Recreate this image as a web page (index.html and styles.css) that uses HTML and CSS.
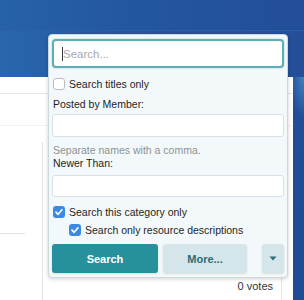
FILE: index.html
```html
<!DOCTYPE html>
<html>
<head>
<meta charset="utf-8">
<link rel="stylesheet" href="styles.css">
</head>
<body>
<div class="page">
  <header class="header">
    <div class="topbar"></div>
    <div class="navbar"></div>
  </header>
  <main class="content">
    <div class="tabs"></div>
    <div class="subtabs"></div>
    <div class="body">
      <div class="side"><div class="side-line"></div></div>
      <div class="box">
        <div class="votes">0 votes</div>
      </div>
    </div>
  </main>

  <form class="search-menu">
    <div class="kw-wrap">
      <input class="kw" type="text" placeholder="Search...">
      <span class="caret"></span>
    </div>
    <label class="check-row">
      <span class="cb"></span>
      <span>Search titles only</span>
    </label>
    <div class="label">Posted by Member:</div>
    <input class="field f1" type="text">
    <div class="note">Separate names with a comma.</div>
    <div class="label2">Newer Than:</div>
    <input class="field f2" type="text">
    <label class="check-row r2">
      <span class="cb on"><svg viewBox="0 0 12 12" width="12" height="12"><path d="M3 6.2 5.1 8.3 9 3.8" fill="none" stroke="#fff" stroke-width="1.7" stroke-linecap="round" stroke-linejoin="round"/></svg></span>
      <span>Search this category only</span>
    </label>
    <label class="check-row r3">
      <span class="cb on"><svg viewBox="0 0 12 12" width="12" height="12"><path d="M3 6.2 5.1 8.3 9 3.8" fill="none" stroke="#fff" stroke-width="1.7" stroke-linecap="round" stroke-linejoin="round"/></svg></span>
      <span>Search only resource descriptions</span>
    </label>
    <div class="buttons">
      <button type="button" class="btn primary">Search</button>
      <button type="button" class="btn more">More...</button>
      <button type="button" class="btn drop"><svg viewBox="0 0 8 5" width="8" height="5"><path d="M0.5 0.5h7L4 4.5z" fill="#2b6d78"/></svg></button>
    </div>
  </form>
</div>
</body>
</html>
```

FILE: styles.css
```css
* { box-sizing: border-box; }
html, body { margin: 0; padding: 0; }
body {
  width: 304px;
  height: 300px;
  overflow: hidden;
  font-family: "Liberation Sans", Arial, sans-serif;
  background:
    radial-gradient(ellipse 14px 40px at 304px 78px, rgba(90,170,220,0.55), rgba(90,170,220,0) 100%),
    linear-gradient(180deg, #23519b 0%, #1f4a95 100%);
}
.page { position: relative; width: 304px; height: 300px; }

.header { height: 77px; }
.topbar {
  height: 30px;
  background: linear-gradient(90deg, #2662a9 0%, #2456a0 45%, #234e99 100%);
}
.navbar {
  height: 47px;
  background:
    radial-gradient(ellipse 26px 22px at 8px 72px, rgba(70,150,205,0.6), rgba(70,150,205,0) 100%),
    linear-gradient(90deg, #2966ad 0%, #2558a1 40%, #234f99 100%);
  border-top: 1px solid #2a5fa6;
}

.content {
  width: 293px;
  height: 223px;
  background: #ffffff;
}
.tabs {
  height: 17px;
  border-bottom: 1px solid #e3e8ec;
}
.subtabs {
  height: 32px;
  border-bottom: 1px solid #f1f3f5;
}
.body {
  display: flex;
  height: 174px;
}
.side { width: 42px; padding-top: 107px; }
.side-line { width: 25px; height: 1px; background: #dfe4e8; }
.box {
  width: 240px;
  margin-top: 16px;
  border-left: 1px solid #e1e6ea;
  border-right: 1px solid #e1e6ea;
  padding: 138px 8px 0 0;
}
.votes {
  text-align: right;
  font-size: 11px;
  color: #333;
  line-height: 13px;
}

/* search menu overlay */
.search-menu {
  position: absolute;
  left: 48px;
  top: 34px;
  width: 240px;
  height: 244px;
  margin: 0;
  padding: 4px 3px;
  background: #f3f9fa;
  border: 1px solid #cbd8dc;
  border-radius: 4px;
  box-shadow: 0 1px 4px rgba(0, 0, 0, 0.18);
  font-size: 10.5px;
  color: #1e1e1e;
  display: flex;
  flex-direction: column;
}
.kw-wrap { position: relative; height: 29px; }
.kw {
  width: 100%;
  height: 29px;
  margin: 0;
  padding: 0 0 0 9px;
  border: 2px solid #5fadb5;
  border-radius: 4px;
  background: #fff;
  font-family: "Liberation Sans", Arial, sans-serif;
  font-size: 11.5px;
  outline: none;
  box-shadow: 0 0 2px rgba(80, 170, 180, 0.5);
}
.kw::placeholder { color: #a6a9ab; }
.caret {
  position: absolute;
  left: 10px;
  top: 8px;
  width: 1px;
  height: 14px;
  background: #333;
}

.check-row {
  display: flex;
  align-items: center;
  gap: 4px;
  height: 14px;
  margin-top: 9px;
  padding-left: 1px;
  line-height: 14px;
}
.cb {
  display: inline-flex;
  align-items: center;
  justify-content: center;
  width: 12px;
  height: 12px;
  border: 1px solid #b8bcbf;
  border-radius: 3px;
  background: #fff;
  flex: none;
}
.cb.on {
  border: none;
  background: #3a8ae3;
}
.label {
  height: 14px;
  line-height: 14px;
  margin-top: 6px;
  padding-left: 1px;
}
.field {
  width: 100%;
  margin: 0;
  border: 1px solid #d6e1e4;
  border-radius: 3px;
  background: #fff;
  outline: none;
}
.f1 { height: 23px; margin-top: 3px; }
.note {
  height: 13px;
  line-height: 13px;
  margin-top: 7px;
  padding-left: 1px;
  color: #8b9294;
}
.label2 {
  height: 13px;
  line-height: 13px;
  padding-left: 1px;
}
.f2 { height: 22px; margin-top: 5px; }
.r2 { margin-top: 8px; }
.r3 { margin-top: 4px; padding-left: 17px; }

.buttons {
  display: flex;
  height: 29px;
  margin-top: 7px;
}
.btn {
  height: 29px;
  margin: 0;
  border: none;
  border-radius: 3px;
  font-family: "Liberation Sans", Arial, sans-serif;
  font-size: 11px;
  font-weight: bold;
  box-shadow: 0 1px 2px rgba(0, 0, 0, 0.12);
  padding: 0;
}
.primary { width: 106px; background: #26919c; color: #fff; }
.more { width: 84px; margin-left: 5px; background: #d5e6ea; color: #2b6d78; }
.drop {
  width: 22px;
  margin-left: 15px;
  background: #d5e6ea;
  display: flex;
  align-items: center;
  justify-content: center;
}
```
